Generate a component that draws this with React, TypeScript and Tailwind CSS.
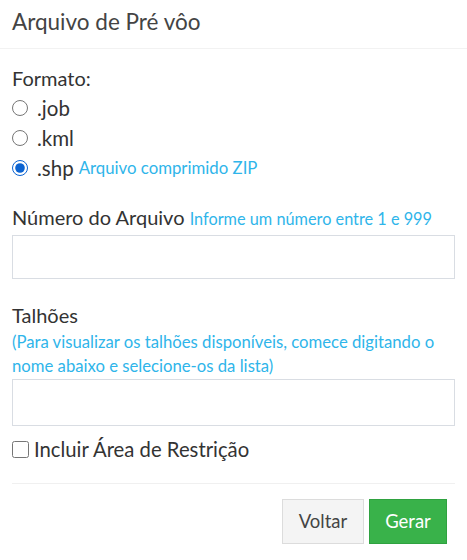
import { useState } from "react";

const formats = [
  { value: "job", label: ".job" },
  { value: "kml", label: ".kml" },
  { value: "shp", label: ".shp", hint: "Arquivo comprimido ZIP" },
];

export default function App() {
  const [format, setFormat] = useState("shp");
  const [restricao, setRestricao] = useState(false);

  return (
    <div className="w-[467px] h-[560px] bg-white text-[#333] font-['Lato',sans-serif]">
      <div className="h-[49px] px-3 pt-[8px] border-b border-[#f2f2f2]">
        <h4 className="text-[22.5px] leading-[28px] text-[#444]">Arquivo de Pré vôo</h4>
      </div>

      <div className="px-3 pt-[16px]">
        <div className="text-[20px] leading-[26px]">Formato:</div>
        <div className="mt-[2px] flex flex-col">
          {formats.map((f) => (
            <label key={f.value} className="flex items-center h-[30px] text-[20.5px]">
              <input
                type="radio"
                name="formato"
                className="w-[16px] h-[16px] m-0 mr-[9px] accent-[#0b63d1]"
                checked={format === f.value}
                onChange={() => setFormat(f.value)}
              />
              <span>{f.label}</span>
              {f.hint && <span className="ml-[5px] text-[16.8px] text-[#2fb5ea]">{f.hint}</span>}
            </label>
          ))}
        </div>

        <div className="mt-[21px] text-[20px] leading-[26px]">
          Número do Arquivo <span className="text-[16.3px] text-[#2fb5ea]">Informe um número entre 1 e 999</span>
        </div>
        <input type="text" className="mt-[3px] w-full h-[44px] border border-[#d9dde3] outline-none px-2" />

        <div className="mt-[23px] text-[20px] leading-[26px]">Talhões</div>
        <div className="mt-[2px] text-[16.7px] leading-[24px] text-[#2fb5ea]">
          (Para visualizar os talhões disponíveis, comece digitando o nome abaixo e selecione-os da lista)
        </div>
        <input type="text" className="mt-[1px] w-full h-[47px] border border-[#d9dde3] outline-none px-2" />

        <label className="mt-[10px] flex items-center text-[20.3px] leading-[26px]">
          <input
            type="checkbox"
            className="w-[17px] h-[17px] m-0 mr-[5px]"
            checked={restricao}
            onChange={() => setRestricao(!restricao)}
          />
          Incluir Área de Restrição
        </label>

        <div className="mt-[21px] border-t border-[#f0f0f0]" />

        <div className="mt-[15px] flex justify-end gap-[5px] pr-[8px]">
          <button className="w-[82px] h-[45px] bg-[#f4f4f4] border border-[#dcdcdc] text-[#444] text-[18.5px]">
            Voltar
          </button>
          <button className="w-[78px] h-[45px] bg-[#39b24a] border border-[#2fa240] text-white text-[18.5px]">
            Gerar
          </button>
        </div>
      </div>
    </div>
  );
}
